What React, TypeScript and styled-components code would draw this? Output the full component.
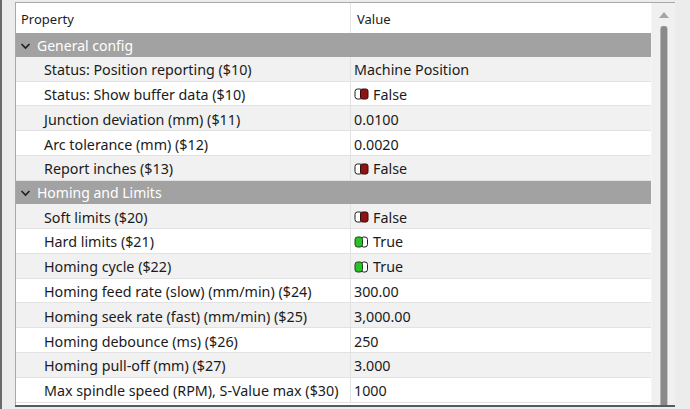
import styled, { createGlobalStyle } from "styled-components";

type Value =
  | { kind: "text"; text: string }
  | { kind: "bool"; on: boolean };

interface Setting {
  label: string;
  value: Value;
}

interface Group {
  title: string;
  rows: Setting[];
}

const t = (text: string): Value => ({ kind: "text", text });
const b = (on: boolean): Value => ({ kind: "bool", on });

const groups: Group[] = [
  {
    title: "General config",
    rows: [
      { label: "Status: Position reporting ($10)", value: t("Machine Position") },
      { label: "Status: Show buffer data ($10)", value: b(false) },
      { label: "Junction deviation (mm) ($11)", value: t("0.0100") },
      { label: "Arc tolerance (mm) ($12)", value: t("0.0020") },
      { label: "Report inches ($13)", value: b(false) },
    ],
  },
  {
    title: "Homing and Limits",
    rows: [
      { label: "Soft limits ($20)", value: b(false) },
      { label: "Hard limits ($21)", value: b(true) },
      { label: "Homing cycle ($22)", value: b(true) },
      { label: "Homing feed rate (slow) (mm/min) ($24)", value: t("300.00") },
      { label: "Homing seek rate (fast) (mm/min) ($25)", value: t("3,000.00") },
      { label: "Homing debounce (ms) ($26)", value: t("250") },
      { label: "Homing pull-off (mm) ($27)", value: t("3.000") },
      { label: "Max spindle speed (RPM), S-Value max ($30)", value: t("1000") },
    ],
  },
];

const GlobalStyle = createGlobalStyle`
  html, body {
    margin: 0;
    padding: 0;
    overflow: hidden;
  }
  body {
    font-family: "Noto Sans", "Open Sans", sans-serif;
    color: #1b1b1b;
  }
`;

const Desktop = styled.div`
  width: 690px;
  height: 409px;
  box-sizing: border-box;
  background: #ececec;
  border-left: 2px solid #6a6a6a;
  padding: 2px 15px 0 13px;
  overflow: hidden;
`;

const Panel = styled.div`
  height: 403px;
  box-sizing: border-box;
  display: flex;
  border: 1px solid #a9a9a9;
  border-bottom: none;
  background: #ffffff;
  box-shadow: 0 2px 0 #5a5a5a;
`;

const Table = styled.div`
  flex: 0 0 635px;
  display: flex;
  flex-direction: column;
  overflow: hidden;
`;

const Row = styled.div`
  display: grid;
  grid-template-columns: 335px 1fr;
  box-sizing: border-box;
  flex: none;
`;

const HeaderRow = styled(Row)`
  height: 30.4px;
  background: #ffffff;
  font-size: 13px;
`;

const HeaderCell = styled.div<{ $first?: boolean }>`
  display: flex;
  align-items: center;
  padding-left: ${(p) => (p.$first ? "5px" : "6px")};
  padding-top: 1px;
  border-right: ${(p) => (p.$first ? "1px solid #e4e4e4" : "none")};
`;

const GroupRow = styled.div`
  height: 23.4px;
  box-sizing: border-box;
  flex: none;
  display: flex;
  align-items: center;
  gap: 6px;
  padding: 1px 0 0 4px;
  background: #a2a2a2;
  color: #ffffff;
  font-size: 14px;
`;

const DataRow = styled(Row)<{ $shade: boolean }>`
  height: 24.8px;
  background: ${(p) => (p.$shade ? "#f1f1f1" : "#ffffff")};
  border-bottom: 1px solid #e2e2e2;
  font-size: 14.3px;
`;

const LabelCell = styled.div`
  display: flex;
  align-items: center;
  padding: 2px 0 0 28px;
  border-right: 1px solid #e2e2e2;
  white-space: nowrap;
  overflow: hidden;
`;

const ValueCell = styled.div`
  display: flex;
  align-items: center;
  gap: 4px;
  padding: 2px 0 0 3px;
  white-space: nowrap;
`;

const Scrollbar = styled.div`
  flex: 0 0 23px;
  background: #f0f0f0;
  border-left: 1px solid #f5f5f5;
  display: flex;
  flex-direction: column;
  align-items: center;
`;

const ArrowUp = styled.div`
  margin-top: 9px;
  width: 0;
  height: 0;
  border-left: 5px solid transparent;
  border-right: 5px solid transparent;
  border-bottom: 6px solid #a6a6a6;
`;

const Thumb = styled.div`
  margin-top: 8px;
  width: 6px;
  flex: 1;
  background: #8a8a8a;
  border-radius: 3px 3px 0 0;
  box-shadow: -1px 0 0 #b5b5b5, 1px 0 0 #c8c8c8;
`;

function Chevron() {
  return (
    <svg width="11" height="8" viewBox="0 0 11 8">
      <path d="M1.5 2 L5.5 6 L9.5 2" fill="none" stroke="#1e1e1e" strokeWidth="1.6" />
    </svg>
  );
}

function Toggle({ on }: { on: boolean }) {
  return (
    <svg width="15" height="12" viewBox="0 0 15 12">
      {on ? (
        <>
          <rect x="7" y="1" width="6.5" height="10" rx="2.5" fill="#ffffff" stroke="#1e1e1e" strokeWidth="1" />
          <rect x="1" y="1" width="7.5" height="10" rx="2.5" fill="#27c327" stroke="#1e3e1e" strokeWidth="1" />
        </>
      ) : (
        <>
          <rect x="1" y="1" width="7.5" height="10" rx="2.5" fill="#ffffff" stroke="#1e1e1e" strokeWidth="1" />
          <rect x="6.5" y="1" width="7.5" height="10" rx="2" fill="#8c1414" stroke="#3a0a0a" strokeWidth="1" />
        </>
      )}
    </svg>
  );
}

function ValueView({ value }: { value: Value }) {
  if (value.kind === "text") return <ValueCell>{value.text}</ValueCell>;
  return (
    <ValueCell>
      <Toggle on={value.on} />
      {value.on ? "True" : "False"}
    </ValueCell>
  );
}

export default function App() {
  return (
    <>
      <GlobalStyle />
      <Desktop>
        <Panel>
          <Table>
            <HeaderRow>
              <HeaderCell $first>Property</HeaderCell>
              <HeaderCell>Value</HeaderCell>
            </HeaderRow>
            {groups.map((g) => (
              <div key={g.title}>
                <GroupRow>
                  <Chevron />
                  {g.title}
                </GroupRow>
                {g.rows.map((r, i) => (
                  <DataRow key={r.label} $shade={i % 2 === 0}>
                    <LabelCell>{r.label}</LabelCell>
                    <ValueView value={r.value} />
                  </DataRow>
                ))}
              </div>
            ))}
          </Table>
          <Scrollbar>
            <ArrowUp />
            <Thumb />
          </Scrollbar>
        </Panel>
      </Desktop>
    </>
  );
}
